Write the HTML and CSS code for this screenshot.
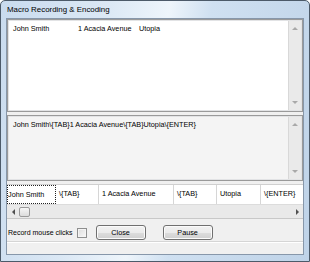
FILE: index.html
```html
<!DOCTYPE html>
<html>
<head>
<meta charset="utf-8">
<link rel="stylesheet" href="styles.css">
</head>
<body>
<div class="window">
  <div class="titlebar">Macro Recording &amp; Encoding</div>
  <div class="client">
    <div class="box box-list">
      <div class="box-content">
        <div class="list-row">
          <span class="c1">John Smith</span><span class="c2">1 Acacia Avenue</span><span class="c3">Utopia</span>
        </div>
      </div>
      <div class="vscroll">
        <span class="arr arr-up"></span>
        <span class="arr arr-down"></span>
      </div>
    </div>
    <div class="box box-text">
      <div class="box-content">
        <div class="text-line">John Smith\{TAB}1 Acacia Avenue\{TAB}Utopia\{ENTER}</div>
      </div>
      <div class="vscroll">
        <span class="arr arr-up"></span>
        <span class="arr arr-down"></span>
      </div>
    </div>
    <div class="grid-box">
      <div class="grid-row">
        <div class="cell cell-focus w1">John Smith</div>
        <div class="cell w2">\{TAB}</div>
        <div class="cell w3">1 Acacia Avenue</div>
        <div class="cell w4">\{TAB}</div>
        <div class="cell w5">Utopia</div>
        <div class="cell w6">\{ENTER}</div>
      </div>
      <div class="hscroll">
        <span class="arr arr-left"></span>
        <span class="thumb"></span>
        <span class="hspacer"></span>
        <span class="arr arr-right"></span>
      </div>
    </div>
    <div class="controls">
      <span class="label">Record mouse clicks</span>
      <span class="checkbox"></span>
      <button class="btn btn-close">Close</button>
      <button class="btn btn-pause">Pause</button>
    </div>
    <div class="status"></div>
  </div>
</div>
</body>
</html>
```

FILE: styles.css
```css
html, body {
  margin: 0;
  padding: 0;
  background: #ffffff;
}
body {
  font-family: "Liberation Sans", Arial, sans-serif;
  font-size: 7.25px;
  color: #000;
}
.window {
  width: 310px;
  height: 262px;
  box-sizing: border-box;
  border: 1px solid #4c5a69;
  border-radius: 5px 5px 0 0;
  background: linear-gradient(100deg, #c9dbee 0%, #dbe8f5 30%, #eef5fb 48%, #cfe0f1 60%, #bfd3e8 100%);
  display: flex;
  flex-direction: column;
  padding: 0 5px 6px 5px;
}
.titlebar {
  height: 17px;
  flex: none;
  font-size: 7.9px;
  line-height: 18px;
  padding-left: 1px;
  color: #000;
}
.client {
  flex: 1;
  min-height: 0;
  background: #f0f0f0;
  border: 1px solid #8797aa;
  display: flex;
  flex-direction: column;
}
.box {
  display: flex;
  border: 1px solid #9a9a9a;
  box-shadow: inset 0 0 0 1px #e2e3e5;
  flex: none;
}
.box-list {
  height: 91px;
  background: #ffffff;
}
.box-text {
  height: 64px;
  margin-top: 3px;
  background: #f4f4f4;
}
.box-content {
  flex: 1;
  padding: 4px 4px;
}
.list-row {
  display: flex;
  line-height: 10px;
}
.c1 { width: 65px; padding-left: 1px; }
.c2 { width: 61px; }
.c3 { width: 40px; }
.text-line {
  line-height: 10px;
  padding-left: 1px;
}
.vscroll {
  width: 12px;
  margin: 1px 1px 1px 0;
  background: #eaeaea;
  border-left: 1px solid #d8d8d8;
  display: flex;
  flex-direction: column;
  justify-content: space-between;
  align-items: center;
  padding: 6px 0 6px;
}
.arr {
  display: block;
  width: 0;
  height: 0;
  border-style: solid;
}
.arr-up {
  border-width: 0 3px 3px 3px;
  border-color: transparent transparent #a9a9a9 transparent;
}
.arr-down {
  border-width: 3px 3px 0 3px;
  border-color: #a9a9a9 transparent transparent transparent;
}
.arr-left {
  border-width: 3px 3px 3px 0;
  border-color: transparent #505050 transparent transparent;
}
.arr-right {
  border-width: 3px 0 3px 3px;
  border-color: transparent transparent transparent #505050;
}
.grid-box {
  margin-top: 3px;
  flex: none;
  border-top: 1px solid #d0d0d0;
  border-bottom: 1px solid #c8c8c8;
  background: #ffffff;
}
.grid-row {
  display: flex;
  height: 19px;
}
.cell {
  box-sizing: border-box;
  line-height: 17px;
  padding-left: 3px;
  border-right: 1px solid #d6d6d6;
  white-space: nowrap;
  overflow: hidden;
}
.cell-focus {
  border: 1px dotted #222;
  padding-left: 0;
}
.w1 { width: 49px; }
.w2 { width: 43px; }
.w3 { width: 75px; }
.w4 { width: 43px; }
.w5 { width: 44px; }
.w6 { flex: 1; border-right: none; }
.hscroll {
  height: 13px;
  background: #e9e9e9;
  border-top: 1px solid #dcdcdc;
  display: flex;
  align-items: center;
  padding: 0 4px 0 5px;
}
.thumb {
  width: 11px;
  height: 10px;
  margin-left: 4px;
  box-sizing: border-box;
  border: 1px solid #9a9a9a;
  border-radius: 2px;
  background: linear-gradient(#f6f6f6, #dcdcdc);
}
.hspacer { flex: 1; }
.controls {
  display: flex;
  align-items: center;
  height: 17px;
  margin-top: 5px;
  padding-left: 1px;
  flex: none;
}
.label {
  font-size: 7px;
  margin-right: 4px;
}
.checkbox {
  width: 10px;
  height: 10px;
  box-sizing: border-box;
  border: 1px solid #8e8f8f;
  background: linear-gradient(135deg, #dcdcdc, #f8f8f8);
  box-shadow: inset 0 0 0 1px #f4f4f4;
  margin-right: 9px;
}
.btn {
  font-family: "Liberation Sans", Arial, sans-serif;
  font-size: 7.25px;
  width: 50px;
  height: 15px;
  box-sizing: border-box;
  border: 1px solid #707070;
  border-radius: 3px;
  background: linear-gradient(#f2f2f2 0%, #ebebeb 50%, #dddddd 51%, #cfcfcf 100%);
  box-shadow: inset 0 0 0 1px #fbfbfb;
  padding: 0;
  color: #000;
}
.btn-pause {
  margin-left: 17px;
}
.status {
  margin-top: auto;
  height: 12px;
  border-top: 1px solid #d5d5d5;
  box-shadow: inset 0 1px 0 #ffffff;
}
```
